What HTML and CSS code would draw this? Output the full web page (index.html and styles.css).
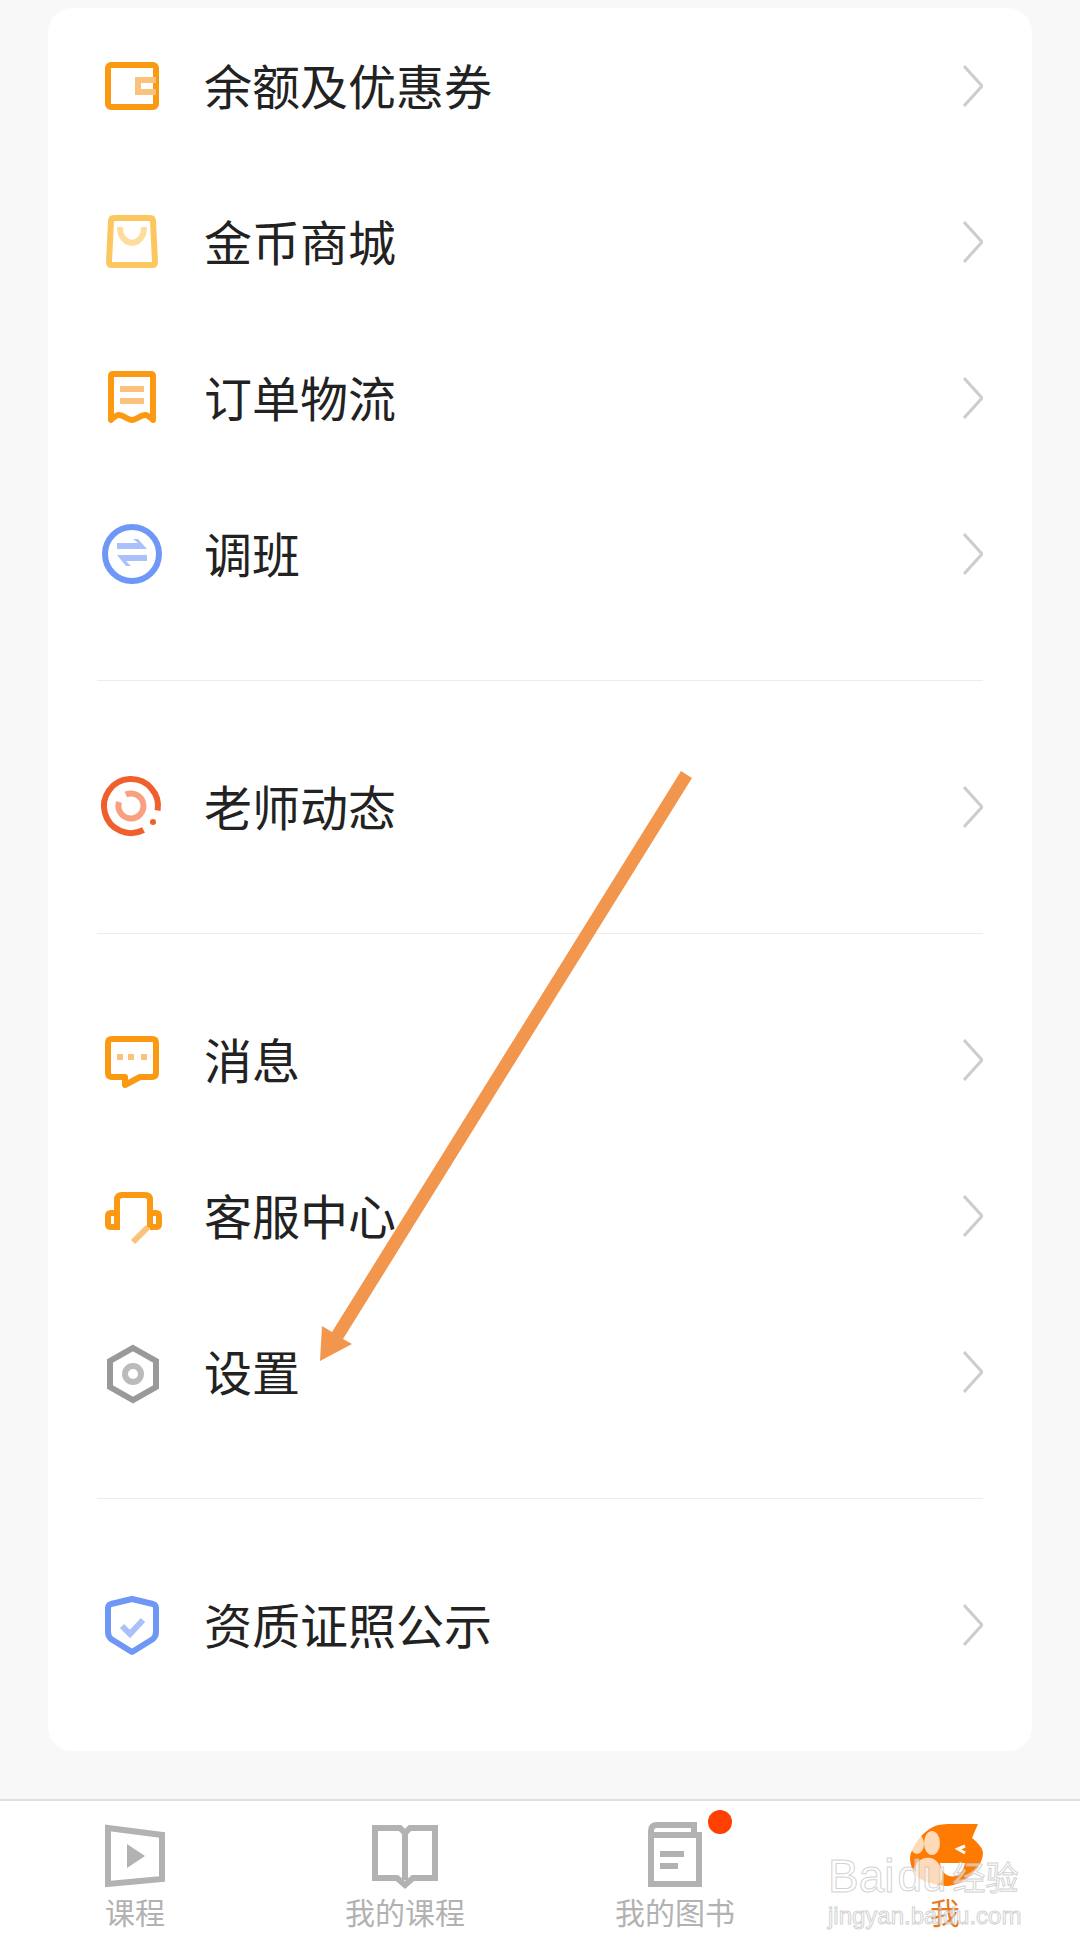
FILE: index.html
```html
<!DOCTYPE html>
<html lang="zh-CN">
<head>
    <meta charset="UTF-8">
    <meta name="viewport" content="width=device-width, initial-scale=1.0">
    <title>我的</title>
    <link rel="stylesheet" href="styles.css">
</head>
<body>
    <div class="card">
        <div class="group group-first">
            <div class="row">
                <svg class="row-icon" viewBox="0 0 64 64">
                    <rect x="8" y="11" width="48" height="42" rx="3" class="line-orange"/>
                    <path d="M56 26H38V38H56" class="line-orange-soft"/>
                </svg>
                <span class="row-text">余额及优惠券</span>
                <svg class="chevron" viewBox="0 0 20 42"><path d="M1 1L19 21L1 41"/></svg>
            </div>
            <div class="row">
                <svg class="row-icon" viewBox="0 0 64 64">
                    <path d="M14 8H50Q53 8 53 11L55 52Q55 55 52 55H12Q9 55 9 52L11 11Q11 8 14 8Z" class="line-yellow"/>
                    <path d="M20 17C20 38 44 38 44 17" class="line-yellow-soft"/>
                </svg>
                <span class="row-text">金币商城</span>
                <svg class="chevron" viewBox="0 0 20 42"><path d="M1 1L19 21L1 41"/></svg>
            </div>
            <div class="row">
                <svg class="row-icon" viewBox="0 0 64 64">
                    <path d="M11 54V10Q11 8 13 8H51Q53 8 53 10V54C50 51 48 49 45 49C41 49 36 54 32 54C28 54 23 49 19 49C16 49 14 51 11 54Z" class="line-orange"/>
                    <path d="M20 23H44M20 35H44" class="line-orange-soft"/>
                </svg>
                <span class="row-text">订单物流</span>
                <svg class="chevron" viewBox="0 0 20 42"><path d="M1 1L19 21L1 41"/></svg>
            </div>
            <div class="row">
                <svg class="row-icon" viewBox="0 0 64 64">
                    <circle cx="32" cy="32" r="27" class="line-blue"/>
                    <path d="M17 27H47L38 17H33L38 21H17ZM47 33H17L26 44H31L26 39H47Z" class="fill-blue-soft"/>
                </svg>
                <span class="row-text">调班</span>
                <svg class="chevron" viewBox="0 0 20 42"><path d="M1 1L19 21L1 41"/></svg>
            </div>
        </div>
        <div class="group">
            <div class="row">
                <svg class="row-icon" viewBox="0 0 64 64">
                    <path d="M57.600 35.600A27 27 0 1 0 43.500 55" class="line-red"/>
                    <circle cx="53" cy="47" r="3" class="fill-red"/>
                    <path d="M25.800 19.600A12.500 12.500 0 1 1 19.100 27" class="line-red-soft"/>
                </svg>
                <span class="row-text">老师动态</span>
                <svg class="chevron" viewBox="0 0 20 42"><path d="M1 1L19 21L1 41"/></svg>
            </div>
        </div>
        <div class="group">
            <div class="row">
                <svg class="row-icon" viewBox="0 0 64 64">
                    <path d="M12 11H52Q56 11 56 15V45Q56 49 52 49H40L25 57V49H12Q8 49 8 45V15Q8 11 12 11Z" class="line-orange"/>
                    <path d="M17 29H23M28 29H34M41 29H47" class="line-orange-soft"/>
                </svg>
                <span class="row-text">消息</span>
                <svg class="chevron" viewBox="0 0 20 42"><path d="M1 1L19 21L1 41"/></svg>
            </div>
            <div class="row">
                <svg class="row-icon" viewBox="0 0 64 64">
                    <path d="M17 46V16Q17 11 22 11H45Q50 11 50 16V44" class="line-orange"/>
                    <path d="M17 29H11Q8 29 8 32V40Q8 43 11 43H17M50 29H56Q59 29 59 32V40Q59 43 56 43H50" class="line-orange"/>
                    <path d="M48 43L33 58" class="line-orange-soft"/>
                </svg>
                <span class="row-text">客服中心</span>
                <svg class="chevron" viewBox="0 0 20 42"><path d="M1 1L19 21L1 41"/></svg>
            </div>
            <div class="row">
                <svg class="row-icon" viewBox="0 0 64 64">
                    <path d="M33 8L56 21V47L33 60L10 47V21Z" class="line-gray"/>
                    <circle cx="33" cy="34" r="8" class="line-gray-soft"/>
                </svg>
                <span class="row-text">设置</span>
                <svg class="chevron" viewBox="0 0 20 42"><path d="M1 1L19 21L1 41"/></svg>
            </div>
        </div>
        <div class="group">
            <div class="row">
                <svg class="row-icon" viewBox="0 0 64 64">
                    <path d="M32 6L53 11Q56 12 56 15V39Q56 43 53 46L32 59L11 46Q8 43 8 39V15Q8 12 11 11Z" class="line-blue"/>
                    <path d="M22 33L30 41L43 27" class="line-blue-soft"/>
                </svg>
                <span class="row-text">资质证照公示</span>
                <svg class="chevron" viewBox="0 0 20 42"><path d="M1 1L19 21L1 41"/></svg>
            </div>
        </div>
    </div>

    <div class="tabbar">
        <div class="tab">
            <svg class="tab-icon" viewBox="0 0 72 66">
                <path d="M9 6L63 13V57L9 62Z" class="tab-line"/>
                <path d="M28 22L46 34L28 46Z" class="tab-fill"/>
            </svg>
            <span class="tab-label">课程</span>
        </div>
        <div class="tab">
            <svg class="tab-icon" viewBox="0 0 72 66">
                <path d="M6 6H31L36 11L41 6H66V56H44L36 63L28 56H6Z" class="tab-line"/>
                <path d="M36 10V58" class="tab-line"/>
            </svg>
            <span class="tab-label">我的课程</span>
        </div>
        <div class="tab">
            <svg class="tab-icon" viewBox="0 0 72 66">
                <path d="M12 13V9Q12 3 18 3H55V13" class="tab-line"/>
                <path d="M12 13H60V62H12Z" class="tab-line"/>
                <path d="M21 29H45V35H21ZM21 41H39V47H21Z" class="tab-fill"/>
            </svg>
            <span class="tab-label">我的图书</span>
            <span class="badge"></span>
        </div>
        <div class="tab tab-active">
            <svg class="tab-icon" viewBox="0 0 72 66">
                <path d="M69 2L63 16C68 20 74 26 74 31C74 42 64 52 58 56C50 62 44 64 36 64C22 62 8 58 6 51C1 44 0 36 2 31C6 20 14 10 24 5C30 2 36 2 44 2Z" class="mascot"/>
                <path d="M56 24L49 27L56 31" class="mascot-eye"/>
                <path d="M31 41H56C54 52 46 56 40 54C34 52 32 47 31 41Z" class="mascot-mouth"/>
                <ellipse cx="8" cy="22" rx="7" ry="10" class="mascot-paw"/>
                <ellipse cx="23" cy="21" rx="8" ry="12" class="mascot-paw"/>
                <ellipse cx="-9" cy="33" rx="6" ry="9" class="mascot-paw"/>
                <path d="M4 52C4 42 12 34 22 36C30 38 36 50 32 60C28 66 10 66 4 52Z" class="mascot-paw"/>
            </svg>
            <span class="tab-label">我</span>
        </div>
    </div>

    <!-- 箭头 -->
    <svg class="arrow" viewBox="0 0 1080 1947">
        <path d="M681 771L692 778L343 1339L352 1344L320 1361L322 1326L332 1332Z"/>
    </svg>

    <!-- 水印 -->
    <div class="watermark">
        <div class="watermark-top">
            <span class="wm-latin">Bai</span>
            <span class="wm-latin wm-du">du</span>
            <span class="wm-cjk">经验</span>
        </div>
        <div class="watermark-url">jingyan.baidu.com</div>
    </div>
</body>
</html>
```
FILE: styles.css
```css
html, body {
    margin: 0;
    padding: 0;
}
body {
    position: relative;
    height: 1947px;
    overflow: hidden;
    background-color: #f8f8f8;
    font-family: "Noto Sans CJK SC", "Noto Sans", sans-serif;
}
.card {
    margin: 8px 48px 48px;
    padding: 0 49px;
    height: 1743px;
    box-sizing: border-box;
    background-color: #fff;
    border-radius: 24px;
}
.group {
    padding: 48px 0;
    border-top: 1px solid #ececec;
}
.group-first {
    padding-top: 0;
    border-top: none;
}
.row {
    display: flex;
    align-items: center;
    height: 156px;
}
.row-icon {
    width: 64px;
    height: 64px;
    margin-left: 3px;
    flex-shrink: 0;
    overflow: visible;
}
.row-text {
    flex: 1;
    margin-left: 40px;
    padding-bottom: 5px;
    font-size: 48px;
    color: #222;
}
.chevron {
    width: 20px;
    height: 42px;
    flex-shrink: 0;
}
.chevron path {
    fill: none;
    stroke: #cdcdcd;
    stroke-width: 3;
}
/* 图标线条 */
.line-orange, .line-orange-soft, .line-yellow, .line-yellow-soft,
.line-blue, .line-blue-soft, .line-red, .line-red-soft, .line-gray, .line-gray-soft {
    fill: none;
    stroke-width: 6;
}
.line-orange, .line-yellow, .line-blue {
    stroke-linejoin: round;
}
.line-orange { stroke: #fb9a12; }
.line-orange-soft { stroke: #fbc27b; }
.line-yellow { stroke: #fcc75f; }
.line-yellow-soft { stroke: #fedc9c; }
.line-blue { stroke: #6f97f6; }
.line-blue-soft { stroke: #a9c1fa; }
.line-red { stroke: #f0602c; }
.line-red-soft { stroke: #f8a080; }
.line-gray { stroke: #999; }
.line-gray-soft { stroke: #bbb; }
.fill-blue-soft { fill: #a9c1fa; }
.fill-red { fill: #f0602c; }

.tabbar {
    display: grid;
    grid-template-columns: repeat(4, 1fr);
    height: 148px;
    background-color: #fff;
    border-top: 2px solid #e0e0e0;
}
.tab {
    position: relative;
    display: flex;
    flex-direction: column;
    align-items: center;
    padding-top: 21px;
}
.tab-icon {
    width: 72px;
    height: 66px;
    overflow: visible;
}
.tab-line {
    fill: none;
    stroke: #b2b2b2;
    stroke-width: 6;
}
.tab-fill {
    fill: #b2b2b2;
}
.tab-label {
    margin-top: 3px;
    font-size: 30px;
    line-height: 40px;
    color: #b2b2b2;
}
.tab-active .tab-label {
    color: #e8791f;
}
.badge {
    position: absolute;
    top: 9px;
    left: 168px;
    width: 24px;
    height: 24px;
    border-radius: 50%;
    background-color: #ff4000;
}
.mascot { fill: #ff7a00; }
.mascot-eye {
    fill: none;
    stroke: #fff;
    stroke-width: 3;
}
.mascot-mouth { fill: #fff; }
.mascot-paw { fill: rgba(255, 255, 255, 0.72); }

.arrow {
    position: absolute;
    top: 0;
    left: 0;
    width: 1080px;
    height: 1947px;
    pointer-events: none;
}
.arrow path {
    fill: #f2964e;
}
.watermark {
    position: absolute;
    top: 1853px;
    left: 828px;
    width: 196px;
    color: rgba(255, 255, 255, 0.5);
    -webkit-text-stroke: 1px rgba(195, 195, 195, 0.75);
}
.watermark-top {
    display: flex;
    align-items: center;
    height: 46px;
}
.wm-latin {
    font-family: "Liberation Sans", sans-serif;
    font-size: 46px;
    line-height: 46px;
}
.wm-du {
    margin-left: 3px;
    font-size: 44px;
}
.wm-cjk {
    margin-left: 6px;
    font-size: 33px;
    line-height: 46px;
    white-space: nowrap;
}
.watermark-url {
    margin-top: 3px;
    font-family: "Liberation Sans", sans-serif;
    font-size: 24px;
    line-height: 28px;
    white-space: nowrap;
}
```
